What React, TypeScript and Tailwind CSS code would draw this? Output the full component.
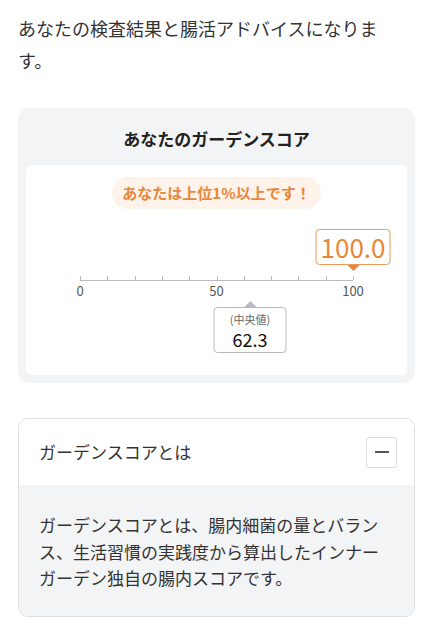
import React from "react";

const FONT = { fontFamily: '"Noto Sans CJK JP", "Noto Sans", sans-serif' };

const SCORE = 100.0;
const MEDIAN = 62.3;
const TICKS = [0, 10, 20, 30, 40, 50, 60, 70, 80, 90, 100];

function ScoreScale() {
  return (
    <div className="relative mx-[54px]">
      {/* your score marker */}
      <div className="relative h-[42px]">
        <div
          className="absolute bottom-0 flex -translate-x-1/2 flex-col items-center"
          style={{ left: `${SCORE}%` }}
        >
          <div className="flex h-[36px] w-[75px] items-center justify-center rounded-[4px] border border-[#ec9a55] bg-white text-[26px] leading-none text-[#e8873a]">
            {SCORE.toFixed(1)}
          </div>
          <div className="h-0 w-0 border-x-[6px] border-t-[6px] border-x-transparent border-t-[#e8873a]" />
        </div>
      </div>

      {/* axis */}
      <div className="relative mt-[5px] h-[5px] border-b border-[#b9b9c4]">
        {TICKS.map((t) => (
          <span
            key={t}
            className="absolute bottom-0 h-[4px] w-px bg-[#b9b9c4]"
            style={{ left: `${t}%` }}
          />
        ))}
      </div>
      <div className="relative h-[20px] text-[13px] text-[#555]">
        {[0, 50, 100].map((t) => (
          <span
            key={t}
            className="absolute top-[2px] -translate-x-1/2 leading-4"
            style={{ left: `${t}%` }}
          >
            {t}
          </span>
        ))}
      </div>

      {/* median marker */}
      <div className="relative h-[54px]">
        <div
          className="absolute top-0 flex -translate-x-1/2 flex-col items-center"
          style={{ left: `${MEDIAN}%` }}
        >
          <div className="h-0 w-0 border-x-[6px] border-b-[6px] border-x-transparent border-b-[#b9b9c4]" />
          <div className="flex h-[46px] w-[73px] flex-col items-center justify-center gap-[2px] rounded-[4px] border border-[#b9b9c4] bg-white">
            <span className="text-[11px] leading-[15px] text-[#666]">(中央値)</span>
            <span className="text-[18px] leading-[20px] text-[#111]">{MEDIAN}</span>
          </div>
        </div>
      </div>
    </div>
  );
}

export default function App() {
  return (
    <div className="min-h-[640px] bg-white px-[18px] text-[#333]" style={FONT}>
      <p className="max-w-[368px] pt-3 text-[18px] leading-[32px]">
        あなたの検査結果と腸活アドバイスになります。
      </p>

      {/* garden score card */}
      <section className="mt-[32px] rounded-[12px] bg-[#f3f4f6] px-2 pb-2">
        <h2 className="flex h-[57px] items-center justify-center pt-[4px] text-[17px] font-bold text-[#222]">
          あなたのガーデンスコア
        </h2>
        <div className="rounded-[6px] bg-white pt-3 pb-[20px]">
          <div className="flex justify-center">
            <span className="flex h-[32px] items-center rounded-full bg-[#fdf3ea] px-[10px] text-[15px] font-bold text-[#e8873a]">
              あなたは上位1%以上です！
            </span>
          </div>
          <div className="mt-[20px]">
            <ScoreScale />
          </div>
        </div>
      </section>

      {/* accordion */}
      <section className="mt-[35px] overflow-hidden rounded-[10px] border border-[#dedede]">
        <div className="flex h-[66px] items-center justify-between bg-white pl-5 pr-[17px]">
          <span className="text-[17px] text-[#333]">ガーデンスコアとは</span>
          <button className="flex h-[31px] w-[31px] items-center justify-center rounded-[3px] border border-[#dcdcdc] bg-white">
            <span className="h-[1.5px] w-[14px] bg-[#555]" />
          </button>
        </div>
        <div className="bg-[#f3f4f6] pl-5 pr-[30px] pt-[27px] pb-[24px] text-[17px] leading-[26.5px] text-[#333]">
          ガーデンスコアとは、腸内細菌の量とバランス、生活習慣の実践度から算出したインナーガーデン独自の腸内スコアです。
        </div>
      </section>
    </div>
  );
}
